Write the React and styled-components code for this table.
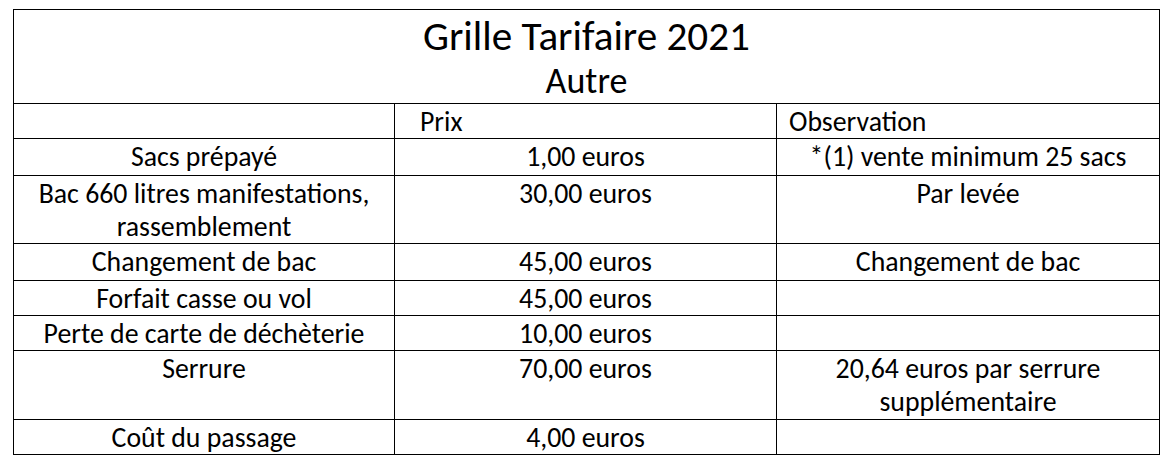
import React from 'react';
import styled, { createGlobalStyle } from 'styled-components';

const Global = createGlobalStyle`
  body {
    margin: 0;
    background: #fff;
    font-family: Carlito, Lato, "Liberation Sans", sans-serif;
    color: #000;
  }
`;

const Page = styled.div`
  padding: 9px 0 0 13px;
`;

const Sheet = styled.table`
  width: 1146px;
  table-layout: fixed;
  border-collapse: collapse;
  font-size: 27.8px;
  line-height: 33px;

  td {
    border: 1px solid #000;
    padding: 1px 0 0;
    vertical-align: top;
  }
`;

const Row = styled.tr`
  height: ${(p) => p.$h}px;
`;

const TitleCell = styled.td`
  text-align: center;
  padding-top: 4px !important;
`;

const MainTitle = styled.div`
  font-size: 41.2px;
  line-height: 45px;
`;

const SubTitle = styled.div`
  margin-top: 2px;
  font-size: 36px;
  line-height: 41px;
`;

const Cell = styled.td`
  text-align: ${(p) => p.$align || 'center'};
  padding-left: ${(p) => p.$indent || 0}px !important;
`;

const rows = [
  { label: 'Sacs prépayé', price: '1,00 euros', note: '*(1) vente minimum 25 sacs', h: 37 },
  { label: 'Bac 660 litres manifestations, rassemblement', price: '30,00 euros', note: 'Par levée', h: 67 },
  { label: 'Changement de bac', price: '45,00 euros', note: 'Changement de bac', h: 37 },
  { label: 'Forfait casse ou vol', price: '45,00 euros', note: '', h: 35 },
  { label: 'Perte de carte de déchèterie', price: '10,00 euros', note: '', h: 34 },
  { label: 'Serrure', price: '70,00 euros', note: '20,64 euros par serrure supplémentaire', h: 69 },
  { label: 'Coût du passage', price: '4,00 euros', note: '', h: 35 },
];

export default function App() {
  return (
    <Page>
      <Global />
      <Sheet>
        <colgroup>
          <col style={{ width: 381 }} />
          <col style={{ width: 382 }} />
          <col style={{ width: 383 }} />
        </colgroup>
        <tbody>
          <Row $h={94}>
            <TitleCell colSpan={3}>
              <MainTitle>Grille Tarifaire 2021</MainTitle>
              <SubTitle>Autre</SubTitle>
            </TitleCell>
          </Row>
          <Row $h={35}>
            <Cell />
            <Cell $align="left" $indent={25}>Prix</Cell>
            <Cell $align="left" $indent={12}>Observation</Cell>
          </Row>
          {rows.map((r) => (
            <Row key={r.label} $h={r.h}>
              <Cell>{r.label}</Cell>
              <Cell>{r.price}</Cell>
              <Cell>{r.note}</Cell>
            </Row>
          ))}
        </tbody>
      </Sheet>
    </Page>
  );
}
